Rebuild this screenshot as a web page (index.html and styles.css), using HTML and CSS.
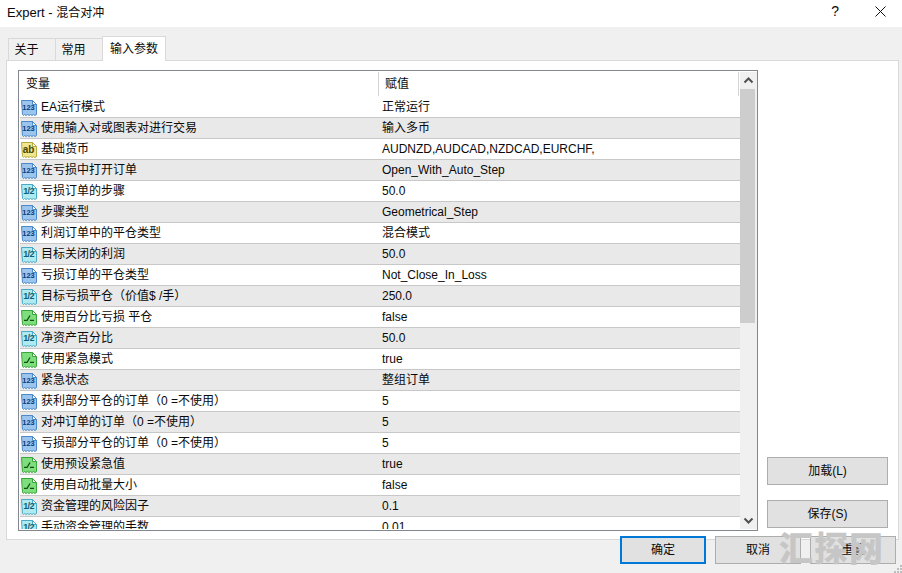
FILE: index.html
```html
<!DOCTYPE html>
<html lang="zh-CN">
<head>
<meta charset="utf-8">
<title>Expert - 混合对冲</title>
<link rel="stylesheet" href="styles.css">
</head>
<body>
<svg class="defs" aria-hidden="true">
  <symbol id="doc" viewBox="0 0 16 17"><path d="M.5 1.5h11l4 4v10l-1.5 1-1.5-1-1.5 1-1.5-1-1.5 1-1.5-1-1.5 1-1.5-1-1 1-1-1z" fill="currentColor" stroke-width="1" stroke="var(--edge)"/><path d="M11.5 1.5v4h4z" fill="#fff" stroke="var(--edge)"/></symbol>
</svg>
<div class="dialog">
  <header class="titlebar">
    <span class="title">Expert - <span class="cjk">混合对冲</span></span>
    <span class="help">?</span>
    <svg class="close" viewBox="0 0 11 11"><path d="M.5.5l10 10M10.5.5l-10 10" stroke="#111" fill="none"/></svg>
  </header>
  <nav class="tabs">
    <span class="tab">关于</span>
    <span class="tab">常用</span>
    <span class="tab active">输入参数</span>
  </nav>
  <main class="panel">
    <section class="list">
      <div class="table">
        <div class="row head"><span class="name">变量</span><span class="value">赋值</span></div>
        <div class="row"><span class="name"><svg class="ic i123"><use href="#doc"/></svg><b class="tag t123">123</b>EA运行模式</span><span class="value">正常运行</span></div>
        <div class="row alt"><span class="name"><svg class="ic i123"><use href="#doc"/></svg><b class="tag t123">123</b>使用输入对或图表对进行交易</span><span class="value">输入多币</span></div>
        <div class="row"><span class="name"><svg class="ic iab"><use href="#doc"/></svg><b class="tag tab-ab">ab</b>基础货币</span><span class="value">AUDNZD,AUDCAD,NZDCAD,EURCHF,</span></div>
        <div class="row alt"><span class="name"><svg class="ic i123"><use href="#doc"/></svg><b class="tag t123">123</b>在亏损中打开订单</span><span class="value">Open_With_Auto_Step</span></div>
        <div class="row"><span class="name"><svg class="ic ihalf"><use href="#doc"/></svg><b class="tag thalf">1/2</b>亏损订单的步骤</span><span class="value">50.0</span></div>
        <div class="row alt"><span class="name"><svg class="ic i123"><use href="#doc"/></svg><b class="tag t123">123</b>步骤类型</span><span class="value">Geometrical_Step</span></div>
        <div class="row"><span class="name"><svg class="ic i123"><use href="#doc"/></svg><b class="tag t123">123</b>利润订单中的平仓类型</span><span class="value">混合模式</span></div>
        <div class="row alt"><span class="name"><svg class="ic ihalf"><use href="#doc"/></svg><b class="tag thalf">1/2</b>目标关闭的利润</span><span class="value">50.0</span></div>
        <div class="row"><span class="name"><svg class="ic i123"><use href="#doc"/></svg><b class="tag t123">123</b>亏损订单的平仓类型</span><span class="value">Not_Close_In_Loss</span></div>
        <div class="row alt"><span class="name"><svg class="ic ihalf"><use href="#doc"/></svg><b class="tag thalf">1/2</b>目标亏损平仓（价值$ /手）</span><span class="value">250.0</span></div>
        <div class="row"><span class="name"><svg class="ic ibool"><use href="#doc"/></svg><svg class="step" viewBox="0 0 10 6"><path d="M0 5.5h3l3-5M6 5.5h4" fill="none" stroke="#0f500f" stroke-width="1.3"/></svg>使用百分比亏损 平仓</span><span class="value">false</span></div>
        <div class="row alt"><span class="name"><svg class="ic ihalf"><use href="#doc"/></svg><b class="tag thalf">1/2</b>净资产百分比</span><span class="value">50.0</span></div>
        <div class="row"><span class="name"><svg class="ic ibool"><use href="#doc"/></svg><svg class="step" viewBox="0 0 10 6"><path d="M0 5.5h3l3-5M6 5.5h4" fill="none" stroke="#0f500f" stroke-width="1.3"/></svg>使用紧急模式</span><span class="value">true</span></div>
        <div class="row alt"><span class="name"><svg class="ic i123"><use href="#doc"/></svg><b class="tag t123">123</b>紧急状态</span><span class="value">整组订单</span></div>
        <div class="row"><span class="name"><svg class="ic i123"><use href="#doc"/></svg><b class="tag t123">123</b>获利部分平仓的订单（0 =不使用）</span><span class="value">5</span></div>
        <div class="row alt"><span class="name"><svg class="ic i123"><use href="#doc"/></svg><b class="tag t123">123</b>对冲订单的订单（0 =不使用）</span><span class="value">5</span></div>
        <div class="row"><span class="name"><svg class="ic i123"><use href="#doc"/></svg><b class="tag t123">123</b>亏损部分平仓的订单（0 =不使用）</span><span class="value">5</span></div>
        <div class="row alt"><span class="name"><svg class="ic ibool"><use href="#doc"/></svg><svg class="step" viewBox="0 0 10 6"><path d="M0 5.5h3l3-5M6 5.5h4" fill="none" stroke="#0f500f" stroke-width="1.3"/></svg>使用预设紧急值</span><span class="value">true</span></div>
        <div class="row"><span class="name"><svg class="ic ibool"><use href="#doc"/></svg><svg class="step" viewBox="0 0 10 6"><path d="M0 5.5h3l3-5M6 5.5h4" fill="none" stroke="#0f500f" stroke-width="1.3"/></svg>使用自动批量大小</span><span class="value">false</span></div>
        <div class="row alt"><span class="name"><svg class="ic ihalf"><use href="#doc"/></svg><b class="tag thalf">1/2</b>资金管理的风险因子</span><span class="value">0.1</span></div>
        <div class="row"><span class="name"><svg class="ic ihalf"><use href="#doc"/></svg><b class="tag thalf">1/2</b>手动资金管理的手数</span><span class="value">0.01</span></div>
      </div>
      <div class="scrollbar">
        <svg class="arrow" viewBox="0 0 17 17"><path d="M4.5 10.5l4-4 4 4" fill="none" stroke="#505050" stroke-width="2"/></svg>
        <div class="track"><div class="thumb"></div></div>
        <svg class="arrow" viewBox="0 0 17 17"><path d="M4.5 6.5l4 4 4-4" fill="none" stroke="#505050" stroke-width="2"/></svg>
      </div>
    </section>
    <aside class="side">
      <button class="btn side-btn">加载(L)</button>
      <button class="btn side-btn">保存(S)</button>
    </aside>
  </main>
  <footer class="footer">
    <button class="btn foot-btn primary">确定</button>
    <button class="btn foot-btn">取消</button>
    <button class="btn foot-btn">重置</button>
  </footer>
  <div class="watermark">汇探网</div>
  <svg class="grip" viewBox="0 0 9 9"><path d="M7 1h2v2H7zM4 4h2v2H4zM7 4h2v2H7zM1 7h2v2H1zM4 7h2v2H4zM7 7h2v2H7z" fill="#bcbcbc"/></svg>
</div>
</body>
</html>
```
FILE: styles.css
```css
* { box-sizing: border-box; }
html, body { margin: 0; padding: 0; }
body {
  width: 902px; height: 573px; overflow: hidden; background: #f0f0f0;
  font: 12px/16px "Liberation Sans", "Noto Sans CJK SC", sans-serif; color: #0a0a0a;
}
.defs { position: absolute; width: 0; height: 0; }
.dialog { position: relative; width: 902px; height: 573px; }
.titlebar {
  height: 27px; background: #fff; display: flex; align-items: center;
  padding: 0 16px 2px 7px; font-size: 13px;
}
.title { flex: 1; }
.cjk { font-size: 12px; }
.help { font-size: 14px; margin: 0 36px 3px 0; }
.close { width: 11px; height: 11px; margin-bottom: 3px; }
.tabs { height: 33px; padding: 0 0 0 8px; display: flex; align-items: flex-end; }
.tab {
  height: 22px; padding: 3px 11px 0 0; width: 48px; text-align: center;
  background: #f0f0f0; border: 1px solid #d9d9d9; border-bottom: 0; margin-right: -1px;
}
.tab.active {
  height: 25px; width: 64px; background: #fff; position: relative; top: 1px;
  z-index: 1; padding: 4px 0 0;
}
.panel {
  margin-left: 6px; width: 893px; height: 480px; background: #fff;
  border: 1px solid #d9d9d9; display: flex; padding: 9px 10px 8px 11px;
}
.list {
  width: 740px; height: 461px; border: 1px solid #828790; background: #fff;
  display: flex; padding: 1px 0 1px 1px; overflow: hidden; flex: none;
}
.table { width: 720px; overflow: hidden; flex: none; }
.row { height: 21px; display: flex; align-items: center; border-bottom: 1px solid #c8c8c8; }
.row.head { height: 25px; border-bottom: 0; padding-bottom: 1px; align-items: stretch; }
.row.alt { background: #e9e9e9; }
.name { width: 359px; display: flex; align-items: center; position: relative; padding-left: 1px; white-space: nowrap; flex: none; }
.value { flex: 1; padding-left: 3px; white-space: nowrap; }
.head .name { padding-left: 6px; border-right: 1px solid #d4d4d4; width: 359px; }
.head .value { padding: 4px 0 0 6px; margin-right: 1px; border-right: 1px solid #d4d4d4; }
.ic { width: 16px; height: 17px; margin-right: 4px; flex: none; }
.i123 { color: #9cc5ee; --edge: #4a88c8; }
.iab { color: #efe68e; --edge: #b8a93c; }
.ihalf { color: #aeeaf0; --edge: #4aa9c4; }
.ibool { color: #7ede7e; --edge: #3ba53b; }
.tag {
  position: absolute; left: 1px; top: 3px; width: 15px; text-align: center;
  font: 700 7.5px/11px "Liberation Sans", sans-serif;
}
.t123 { color: #0a3a80; }
.tab-ab { color: #4a4306; font-size: 10px; }
.thalf { color: #0c5f7a; font-size: 9px; letter-spacing: -.7px; }
.step { position: absolute; left: 4px; top: 6px; width: 10px; height: 6px; }
.scrollbar { width: 17px; background: #f0f0f0; display: flex; flex-direction: column; flex: none; }
.arrow { width: 17px; height: 17px; flex: none; }
.track { flex: 1; padding: 0 1px 0 0; }
.thumb { width: 15px; height: 234px; background: #cdcdcd; }
.side { flex: 1; display: flex; flex-direction: column; justify-content: flex-end; align-items: flex-end; gap: 15px; padding-bottom: 3px; }
.btn {
  font: inherit; color: #0a0a0a; background: #e1e1e1; border: 1px solid #adadad;
  padding: 0; display: block;
}
.side-btn { width: 121px; height: 28px; flex: none; }
.footer {
  display: flex; justify-content: flex-end; gap: 9px; padding-right: 6px; margin-top: -4px;
  position: relative;
}
.foot-btn { width: 86px; height: 28px; }
.primary { border: 2px solid #0078d7; }
.watermark {
  position: absolute; left: 779px; top: 527px; font: 900 34px/40px "Noto Sans CJK SC", sans-serif;
  letter-spacing: 1px; color: #c6c6c6; white-space: nowrap;
}
.grip { position: absolute; right: 0; bottom: 0; width: 9px; height: 9px; }
```
